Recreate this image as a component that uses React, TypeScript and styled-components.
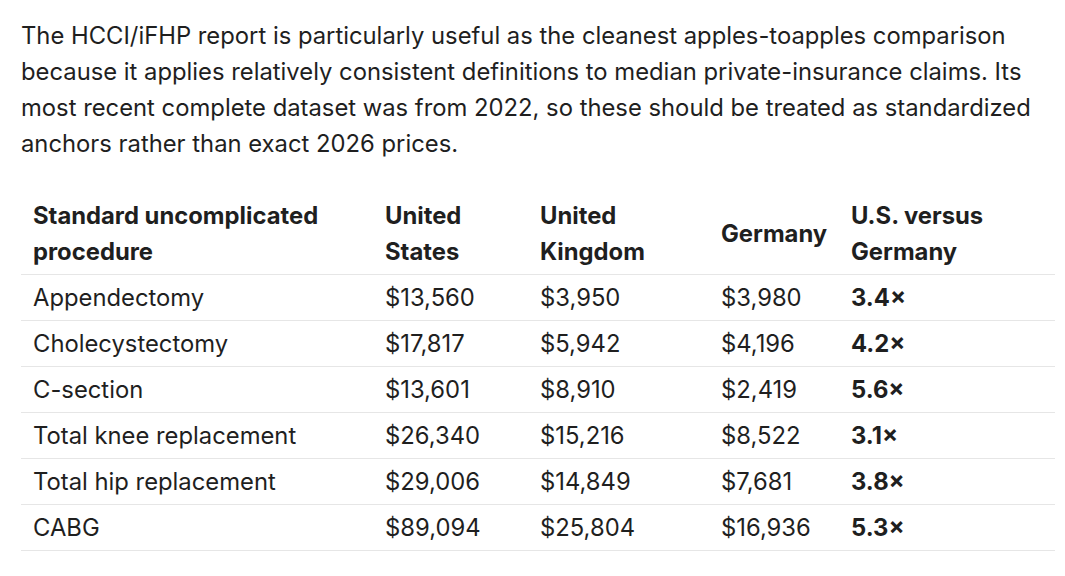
import React from "react";
import styled, { createGlobalStyle } from "styled-components";

const Global = createGlobalStyle`
  html, body { margin: 0; padding: 0; background: #ffffff; }
  body { font-family: Inter, "Noto Sans", sans-serif; color: #1f1f1f; }
`;

const Page = styled.div`
  padding: 18px 10px 0 21px;
`;

const Para = styled.p`
  margin: 0 0 31px 0;
  font-size: 23.8px;
  line-height: 36px;
  max-width: 1024px;
`;

const Table = styled.table`
  border-collapse: collapse;
  width: 1034px;
  table-layout: fixed;
  font-size: 23.8px;
  line-height: 36px;
`;

const Th = styled.th`
  text-align: left;
  font-weight: 700;
  vertical-align: middle;
  padding: 4.5px 12px;
  border-bottom: 1px solid #e6e6e6;
`;

const Td = styled.td<{ $bold?: boolean }>`
  padding: 4.5px 12px;
  border-bottom: 1px solid #e6e6e6;
  font-weight: ${(p) => (p.$bold ? 700 : 400)};
  white-space: nowrap;
`;

const rows = [
  ["Appendectomy", "$13,560", "$3,950", "$3,980", "3.4×"],
  ["Cholecystectomy", "$17,817", "$5,942", "$4,196", "4.2×"],
  ["C-section", "$13,601", "$8,910", "$2,419", "5.6×"],
  ["Total knee replacement", "$26,340", "$15,216", "$8,522", "3.1×"],
  ["Total hip replacement", "$29,006", "$14,849", "$7,681", "3.8×"],
  ["CABG", "$89,094", "$25,804", "$16,936", "5.3×"],
];

const widths = [352, 155, 181, 130, 216];

export default function App() {
  return (
    <Page>
      <Global />
      <Para>
        The HCCI/iFHP report is particularly useful as the cleanest apples-toapples comparison
        because it applies relatively consistent definitions to median private-insurance claims. Its
        most recent complete dataset was from 2022, so these should be treated as standardized
        anchors rather than exact 2026 prices.
      </Para>
      <Table>
        <colgroup>
          {widths.map((w, i) => (
            <col key={i} style={{ width: w }} />
          ))}
        </colgroup>
        <thead>
          <tr>
            <Th>Standard uncomplicated procedure</Th>
            <Th>United States</Th>
            <Th>United Kingdom</Th>
            <Th>Germany</Th>
            <Th>U.S. versus Germany</Th>
          </tr>
        </thead>
        <tbody>
          {rows.map((r) => (
            <tr key={r[0]}>
              <Td>{r[0]}</Td>
              <Td>{r[1]}</Td>
              <Td>{r[2]}</Td>
              <Td>{r[3]}</Td>
              <Td $bold>{r[4]}</Td>
            </tr>
          ))}
        </tbody>
      </Table>
    </Page>
  );
}
